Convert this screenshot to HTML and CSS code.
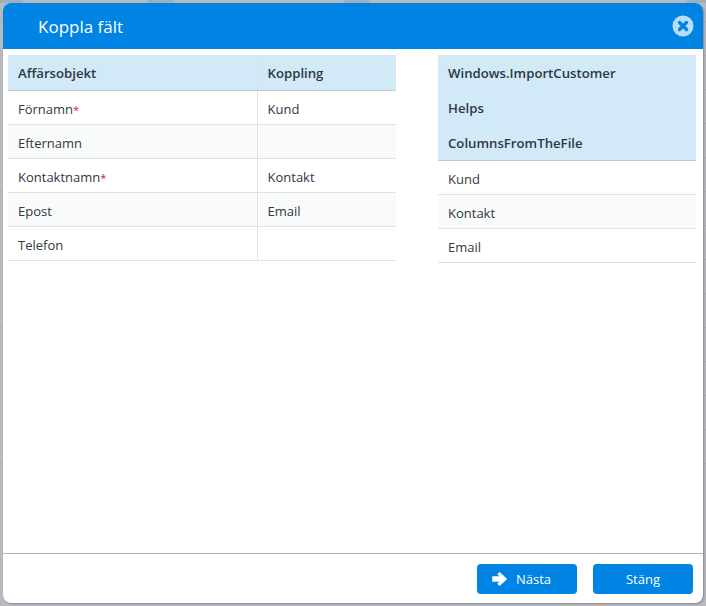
FILE: index.html
```html
<!DOCTYPE html>
<html lang="en">
<head>
    <meta charset="UTF-8">
    <title>Koppla fält</title>
    <link rel="stylesheet" href="styles.css">
</head>
<body>
    <div class="dialog">
        <div class="dialog-header">
            <h1>Koppla fält</h1>
            <button class="close" aria-label="Stäng">
                <svg width="22" height="22" viewBox="0 0 22 22">
                    <circle cx="11" cy="11" r="10.5" fill="#b5dcf8"/>
                    <path d="M7.5 7.5l7 7M14.5 7.5l-7 7" stroke="#0084e3" stroke-width="3.2" stroke-linecap="round" fill="none"/>
                </svg>
            </button>
        </div>

        <div class="dialog-body">
            <table class="grid grid-left">
                <thead>
                    <tr><th class="col-name">Affärsobjekt</th><th>Koppling</th></tr>
                </thead>
                <tbody>
                    <tr><td class="col-name">Förnamn<span class="req">*</span></td><td>Kund</td></tr>
                    <tr><td class="col-name">Efternamn</td><td></td></tr>
                    <tr><td class="col-name">Kontaktnamn<span class="req">*</span></td><td>Kontakt</td></tr>
                    <tr><td class="col-name">Epost</td><td>Email</td></tr>
                    <tr><td class="col-name">Telefon</td><td></td></tr>
                </tbody>
            </table>

            <table class="grid grid-right">
                <thead>
                    <tr class="stacked"><th>Windows.ImportCustomer</th></tr>
                    <tr class="stacked"><th>Helps</th></tr>
                    <tr><th>ColumnsFromTheFile</th></tr>
                </thead>
                <tbody>
                    <tr><td>Kund</td></tr>
                    <tr><td>Kontakt</td></tr>
                    <tr><td>Email</td></tr>
                </tbody>
            </table>
        </div>

        <div class="dialog-footer">
            <button class="btn btn-next">
                <svg width="16" height="14" viewBox="0 0 16 14">
                    <path d="M0.5 4.6h7.6L5.6 2.2 7.6 0.3 14.8 7 7.6 13.7 5.6 11.8 8.1 9.4H0.5z" fill="#fff" stroke="#fff" stroke-width="0.6" stroke-linejoin="round"/>
                </svg>
                Nästa
            </button>
            <button class="btn">Stäng</button>
        </div>
    </div>
</body>
</html>
```

FILE: styles.css
```css
/* General Styles */
* {
    box-sizing: border-box;
}

body {
    margin: 0;
    padding: 3px;
    height: 606px;
    overflow: hidden;
    font-family: "Open Sans", "Noto Sans", sans-serif;
    font-size: 13px;
    color: #2f3845;
    /* dimmed page behind the dialog: tabs along the top, table rows below */
    background-color: #b9babf;
    background-image:
        linear-gradient(#9db0c0, #9db0c0),
        linear-gradient(#9db0c0, #9db0c0),
        linear-gradient(#9db0c0, #9db0c0),
        linear-gradient(#9db0c0, #9db0c0),
        repeating-linear-gradient(#adaeb3 0 1px, transparent 1px 34px);
    background-repeat: no-repeat;
    background-size: 23px 3px, 25px 3px, 25px 3px, 19px 3px, 100% 443px;
    background-position: 0 0, 148px 0, 344px 0, 687px 0, 0 21px;
}

.dialog {
    display: flex;
    flex-direction: column;
    width: 700px;
    height: 600px;
    background: #fff;
    border-radius: 8px;
    overflow: hidden;
    box-shadow: 1px 1px 2px rgba(70, 70, 100, 0.45);
}

/* Header */
.dialog-header {
    display: flex;
    align-items: center;
    justify-content: space-between;
    height: 46px;
    padding: 0 9px 0 35px;
    background: #0084e3;
}

.dialog-header h1 {
    margin: 0;
    font-size: 17px;
    font-weight: 400;
    color: #fff;
}

.close {
    display: flex;
    padding: 0;
    border: none;
    background: none;
}

/* Tables */
.dialog-body {
    flex: 1;
    display: flex;
    align-items: flex-start;
    gap: 42px;
    padding: 6px 7px 0 5px;
}

.grid {
    border-collapse: collapse;
    table-layout: fixed;
}

.grid-left {
    width: 388px;
}

.grid-right {
    width: 258px;
}

.grid th {
    height: 35px;
    padding: 1px 10px 0;
    background: #d2e9f8;
    text-align: left;
    font-size: 13.2px;
    font-weight: 600;
    border-bottom: 1px solid #c4c8d0;
}

.grid .stacked th {
    border-bottom: none;
}

.grid td {
    height: 34px;
    padding: 3px 10px 0;
    border-bottom: 1px solid #dfe1e6;
}

.grid tbody tr:nth-child(even) td {
    background: #f9fafa;
}

.col-name {
    width: 249px;
    border-right: 1px solid #dfe1e6;
}

.grid thead .col-name {
    border-right-color: #dfe1e6;
}

.req {
    color: #e0103a;
    font-size: 11px;
}

/* Footer */
.dialog-footer {
    display: flex;
    justify-content: flex-end;
    gap: 16px;
    height: 50px;
    padding: 10px 10px 0 0;
    border-top: 1px solid #b0b2b8;
}

.btn {
    display: flex;
    align-items: center;
    justify-content: center;
    gap: 8px;
    width: 100px;
    height: 30px;
    padding: 0;
    border: none;
    border-radius: 4px;
    background: #0084e3;
    color: #fff;
    font-family: inherit;
    font-size: 13px;
}

.btn-next {
    padding-right: 11px;
}
```
